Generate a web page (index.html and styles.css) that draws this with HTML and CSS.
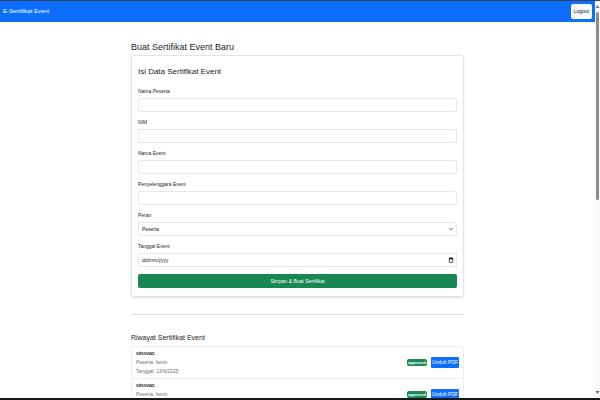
FILE: index.html
```html
<!DOCTYPE html>
<html lang="id">
<head>
<meta charset="utf-8">
<meta name="viewport" content="width=device-width, initial-scale=1">
<title>E-Sertifikat Event</title>
<link rel="stylesheet" href="styles.css">
</head>
<body>
<div class="window">
  <div class="page">
    <header class="navbar">
      <a class="brand" href="#">E-Sertifikat Event</a>
      <button class="logout" type="button">Logout</button>
    </header>
    <main class="container">
      <h1 class="title">Buat Sertifikat Event Baru</h1>
      <section class="card">
        <h2 class="card-title">Isi Data Sertifikat Event</h2>
        <form>
          <div class="field"><label for="nama">Nama Peserta</label><input class="control" id="nama" type="text"></div>
          <div class="field"><label for="nim">NIM</label><input class="control" id="nim" type="text"></div>
          <div class="field"><label for="event">Nama Event</label><input class="control" id="event" type="text"></div>
          <div class="field"><label for="org">Penyelenggara Event</label><input class="control" id="org" type="text"></div>
          <div class="field"><label for="peran">Peran</label>
            <div class="control-wrap">
              <select class="control" id="peran"><option>Peserta</option></select>
              <svg class="control-icon" viewBox="0 0 6 6"><path d="M1.2 2 3 4l1.800-2" fill="none" stroke="#555b61" stroke-width=".8"/></svg>
            </div>
          </div>
          <div class="field"><label for="tanggal">Tanggal Event</label>
            <div class="control-wrap">
              <input class="control" id="tanggal" type="text" placeholder="dd/mm/yyyy">
              <svg class="control-icon" viewBox="0 0 6 6"><rect x="1.300" y="1" width="3.400" height="4.500" rx=".3" fill="#fff" stroke="#222" stroke-width=".7"/><path d="M1 .8h4v1.500H1z" fill="#111"/></svg>
            </div>
          </div>
          <button class="submit" type="submit">Simpan &amp; Buat Sertifikat</button>
        </form>
      </section>
      <hr class="rule">
      <h2 class="history-title">Riwayat Sertifikat Event</h2>
      <ul class="history">
        <li class="entry">
          <div class="details"><strong>sinovac</strong><span>Peserta: kevin</span><span>Tanggal: 13/6/2025</span></div>
          <span class="badge">approved</span>
          <a class="download" href="#">Unduh PDF</a>
        </li>
        <li class="entry">
          <div class="details"><strong>sinovac</strong><span>Peserta: kevin</span></div>
          <span class="badge">approved</span>
          <a class="download" href="#">Unduh PDF</a>
        </li>
      </ul>
    </main>
  </div>
  <div class="scrollbar">
    <svg class="arrow" viewBox="0 0 5 5"><path d="M.5 4 2.500 1l2 3z" fill="#777"/></svg>
    <div class="track"><div class="thumb"></div></div>
    <svg class="arrow" viewBox="0 0 5 5"><path d="M.5 1 2.500 4l2-3z" fill="#666"/></svg>
  </div>
</div>
</body>
</html>
```

FILE: styles.css
```css
* { box-sizing: border-box; }

body {
  margin: 0;
  background: #fff;
  color: #212529;
  font: 5px/9px "Liberation Sans", sans-serif;
}

button, input, select { font: inherit; color: inherit; }
a { text-decoration: none; }
h1, h2, ul { margin: 0; padding: 0; font-weight: 400; }

.window {
  display: flex;
  height: 100vh;
  border-top: 1px solid #34435c;
  border-bottom: 2px solid #17181b;
  overflow: hidden;
}

.page { flex: 1; overflow: hidden; }

.navbar {
  display: flex;
  align-items: center;
  justify-content: space-between;
  padding: 3px;
  background: #0d6efd;
}

.brand { color: #fff; font-size: 6px; }

.logout {
  padding: 3px;
  border: 0;
  border-radius: 2px;
  background: #f8f9fa;
}

.container { width: 56%; margin: 0 auto; padding-top: 18px; }

.title { font-size: 9px; line-height: 15px; }

.card {
  padding: 8px 6px;
  border: 1px solid #e2e4e6;
  border-radius: 3px;
  box-shadow: 0 1px 2px #0002;
}

.card-title { margin-bottom: 8px; font-size: 8px; line-height: 15px; }

.field { margin-bottom: 6px; }
.field label { display: block; margin-bottom: 2px; }

.control {
  display: block;
  width: 100%;
  height: 14px;
  padding: 0 3px;
  border: 1px solid #e6e9ec;
  border-radius: 2px;
  background: #fff;
  appearance: none;
}

.control::placeholder { color: #212529; opacity: 1; }

.control-wrap { position: relative; }
.control-icon { position: absolute; right: 3px; top: 4px; width: 6px; height: 6px; pointer-events: none; }

.submit {
  display: block;
  width: 100%;
  height: 14px;
  margin-top: 7px;
  padding: 0;
  border: 0;
  border-radius: 2px;
  background: #198754;
  color: #fff;
}

.rule { margin: 17px 0 16px; border: 0; border-top: 1px solid #dcddde; }

.history-title { margin-bottom: 1px; font-size: 7px; line-height: 14px; }

.history { border: 1px solid #eceef0; border-radius: 2px; list-style: none; }

.entry {
  display: flex;
  align-items: center;
  gap: 4px;
  padding: 2px 4px;
}

.entry + .entry { align-items: flex-start; border-top: 1px solid #eceef0; }
.entry + .entry .badge { margin-top: 10px; }
.entry + .entry .download { margin-top: 8px; }

.details { display: flex; flex: 1; flex-direction: column; color: #6c757d; }
.details strong { color: #212529; }

.badge {
  padding: 0 1px;
  border-radius: 2px;
  background: #198754;
  color: #fff;
  font-size: 4px;
  font-weight: 700;
  line-height: 7px;
}

.download {
  padding: 1px;
  border-radius: 1px;
  background: #0d6efd;
  color: #fff;
}

.scrollbar { display: flex; flex-direction: column; width: 5px; background: #fafafa; }
.arrow { width: 5px; height: 5px; margin: 3px 0; }
.track { flex: 1; padding: 0 1px; }
.thumb { height: 50%; border-radius: 2px; background: #8b8b8b; }
```
